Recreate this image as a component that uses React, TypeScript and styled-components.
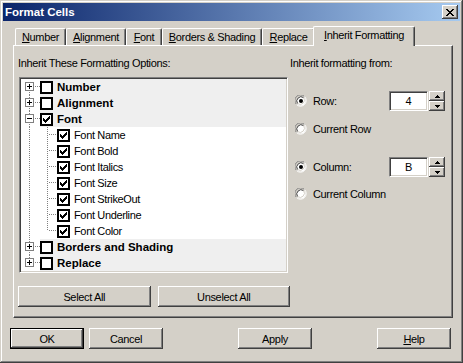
import React from "react";
import styled, { createGlobalStyle } from "styled-components";

const GlobalStyle = createGlobalStyle`
  html, body {
    margin: 0;
    padding: 0;
    background: #d4d0c8;
  }
  body {
    font-family: "Liberation Sans", Arial, sans-serif;
    font-size: 11px;
    letter-spacing: -0.35px;
    color: #000;
  }
`;

const Window = styled.div`
  box-sizing: border-box;
  width: 463px;
  height: 363px;
  padding: 3px;
  background: #d4d0c8;
  box-shadow: inset -1px -1px #404040, inset 1px 1px #d4d0c8,
    inset -2px -2px #808080, inset 2px 2px #ffffff;
  display: flex;
  flex-direction: column;
`;

const TitleBar = styled.div`
  height: 18px;
  display: flex;
  align-items: center;
  padding: 0 2px 0 2px;
  background: linear-gradient(to right, #0a246a, #a6caf0);
`;

const TitleText = styled.span`
  flex: 1;
  color: #fff;
  font-weight: bold;
  font-size: 11.5px;
  letter-spacing: 0;
`;

const CloseBox = styled.div`
  box-sizing: border-box;
  width: 16px;
  height: 14px;
  background: #d4d0c8;
  box-shadow: inset -1px -1px #404040, inset 1px 1px #ffffff,
    inset -2px -2px #808080;
  display: flex;
  align-items: center;
  justify-content: center;
`;

const Body = styled.div`
  padding: 5px 0 0 10px;
`;

const TabRow = styled.div`
  height: 19px;
  display: flex;
  align-items: flex-end;
  padding-left: 2px;
`;

const Tab = styled.div<{ $w: number; $active?: boolean }>`
  box-sizing: border-box;
  width: ${(p) => p.$w}px;
  height: ${(p) => (p.$active ? 20 : 17)}px;
  margin: ${(p) => (p.$active ? "0 -2px -1px -2px" : "0")};
  position: relative;
  z-index: ${(p) => (p.$active ? 1 : 0)};
  background: #d4d0c8;
  border-top: 1px solid #fff;
  border-left: 1px solid #fff;
  border-right: 1px solid #404040;
  border-radius: 2px 2px 0 0;
  box-shadow: inset -1px 0 #808080;
  display: flex;
  justify-content: center;
  padding-top: ${(p) => (p.$active ? 2 : 2)}px;
  white-space: nowrap;
`;

const Panel = styled.div`
  box-sizing: border-box;
  width: 440px;
  height: 273px;
  background: #d4d0c8;
  border-top: 1px solid #fff;
  border-left: 1px solid #fff;
  border-right: 1px solid #404040;
  border-bottom: 1px solid #404040;
  box-shadow: inset -1px -1px #808080;
  display: grid;
  grid-template-columns: 272px 1fr;
  padding: 10px 6px 0 4px;
`;

const Column = styled.div`
  display: flex;
  flex-direction: column;
`;

const Caption = styled.div`
  height: 14px;
  line-height: 14px;
  white-space: nowrap;
`;

const TreeBox = styled.div`
  box-sizing: border-box;
  width: 269px;
  height: 196px;
  margin: 7px 0 0 1px;
  background: #fff;
  border-top: 1px solid #808080;
  border-left: 1px solid #808080;
  border-right: 1px solid #fff;
  border-bottom: 1px solid #fff;
  box-shadow: inset 1px 1px #404040, inset -1px -1px #d4d0c8;
  padding: 1px;
`;

const TreeRow = styled.div`
  display: flex;
  height: 16px;
`;

const TreeItem = styled.div<{ $top?: boolean }>`
  flex: 1;
  display: flex;
  align-items: center;
  gap: 4px;
  background: ${(p) => (p.$top ? "#efefef" : "#fff")};
  font-weight: ${(p) => (p.$top ? "bold" : "normal")};
  font-size: ${(p) => (p.$top ? "11.5px" : "11px")};
  letter-spacing: ${(p) => (p.$top ? "0" : "-0.35px")};
  white-space: nowrap;
`;

const Check = styled.div`
  box-sizing: border-box;
  width: 13px;
  height: 13px;
  border: 2px solid #000;
  background: #fff;
  display: flex;
  align-items: center;
  justify-content: center;
`;

const ButtonRow = styled.div`
  display: flex;
  gap: 7px;
  margin-top: 13px;
`;

const Button = styled.div<{ $w: number; $h?: number; $default?: boolean }>`
  box-sizing: border-box;
  width: ${(p) => p.$w}px;
  height: ${(p) => p.$h ?? 21}px;
  background: #d4d0c8;
  display: flex;
  align-items: center;
  justify-content: center;
  border: ${(p) => (p.$default ? "1px solid #000" : "none")};
  box-shadow: inset -1px -1px #404040, inset 1px 1px #ffffff,
    inset -2px -2px #808080;
  white-space: nowrap;
`;

const OptionLine = styled.div<{ $mt: number }>`
  height: 20px;
  margin-top: ${(p) => p.$mt}px;
  display: flex;
  align-items: center;
  padding-left: 5px;
  white-space: nowrap;
`;

const RadioLabel = styled.span`
  margin-left: 6px;
  flex: 1;
`;

const Spin = styled.div`
  display: flex;
  align-items: center;
  gap: 1px;
  margin-right: 1px;
`;

const EditBox = styled.div`
  box-sizing: border-box;
  width: 39px;
  height: 20px;
  background: #fff;
  border-top: 1px solid #808080;
  border-left: 1px solid #808080;
  border-right: 1px solid #fff;
  border-bottom: 1px solid #fff;
  box-shadow: inset 1px 1px #404040, inset -1px -1px #d4d0c8;
  display: flex;
  align-items: center;
  justify-content: center;
`;

const SpinButtons = styled.div`
  display: flex;
  flex-direction: column;
`;

const SpinButton = styled.div`
  box-sizing: border-box;
  width: 16px;
  height: 10px;
  background: #d4d0c8;
  box-shadow: inset -1px -1px #404040, inset 1px 1px #ffffff,
    inset -2px -2px #808080;
  display: flex;
  align-items: center;
  justify-content: center;
`;

const Footer = styled.div`
  display: flex;
  margin-top: 10px;
  padding-left: 7px;
`;

const Spacer = styled.div<{ $w: number }>`
  width: ${(p) => p.$w}px;
  flex-shrink: 0;
`;

type GutterKind = "first" | "mid" | "last" | "child" | "childLast";

function Gutter({ kind, expanded }: { kind: GutterKind; expanded?: boolean }) {
  const dot = { stroke: "#808080", strokeDasharray: "1 1", shapeRendering: "crispEdges" as const };
  if (kind === "child" || kind === "childLast") {
    return (
      <svg width="36" height="16" style={{ flexShrink: 0 }}>
        <line x1="8.5" y1="0" x2="8.5" y2="16" {...dot} />
        <line x1="26.5" y1="0" x2="26.5" y2={kind === "childLast" ? 8 : 16} {...dot} />
        <line x1="28" y1="7.5" x2="36" y2="7.5" {...dot} />
      </svg>
    );
  }
  return (
    <svg width="19" height="16" style={{ flexShrink: 0 }}>
      {kind !== "first" && <line x1="8.5" y1="0" x2="8.5" y2="3" {...dot} />}
      {kind !== "last" && <line x1="8.5" y1="13" x2="8.5" y2="16" {...dot} />}
      <line x1="14" y1="7.5" x2="19" y2="7.5" {...dot} />
      <rect x="4.5" y="3.5" width="8" height="8" fill="#fff" stroke="#808080" shapeRendering="crispEdges" />
      <line x1="6" y1="7.5" x2="11" y2="7.5" stroke="#000" shapeRendering="crispEdges" />
      {!expanded && <line x1="8.5" y1="5" x2="8.5" y2="10" stroke="#000" shapeRendering="crispEdges" />}
    </svg>
  );
}

function CheckBox({ checked }: { checked?: boolean }) {
  return (
    <Check>
      {checked && (
        <svg width="7" height="7" viewBox="0 0 7 7">
          <path d="M0 2h1v1h1v1h1V3h1V2h1V1h1V0h1v3H6v1H5v1H4v1H3v1H2V6H1V5H0z" fill="#000" />
        </svg>
      )}
    </Check>
  );
}

function Radio({ checked }: { checked?: boolean }) {
  return (
    <svg width="12" height="12" viewBox="0 0 12 12" style={{ flexShrink: 0 }}>
      <path d="M1.5 9.5 A5.5 5.5 0 0 1 9.5 1.5" fill="none" stroke="#808080" />
      <path d="M9.5 1.5 A5.5 5.5 0 0 1 1.5 9.5" fill="none" stroke="#ffffff" />
      <circle cx="6" cy="6" r="4.5" fill="#fff" />
      <path d="M2.6 8.6 A4.3 4.3 0 0 1 8.6 2.6" fill="none" stroke="#404040" />
      <path d="M8.6 2.6 A4.3 4.3 0 0 1 2.6 8.6" fill="none" stroke="#d4d0c8" />
      {checked && <circle cx="6" cy="6" r="2" fill="#000" />}
    </svg>
  );
}

function SpinBox({ value }: { value: string }) {
  return (
    <Spin>
      <EditBox>{value}</EditBox>
      <SpinButtons>
        <SpinButton>
          <svg width="5" height="3"><path d="M2 0h1v1h1v1h1v1H0V2h1V1h1z" fill="#000" /></svg>
        </SpinButton>
        <SpinButton>
          <svg width="5" height="3"><path d="M0 0h5v1H4v1H3v1H2V2H1V1H0z" fill="#000" /></svg>
        </SpinButton>
      </SpinButtons>
    </Spin>
  );
}

type Node = { label: string; top: boolean; checked: boolean; kind: GutterKind; expanded?: boolean };

const nodes: Node[] = [
  { label: "Number", top: true, checked: false, kind: "first" },
  { label: "Alignment", top: true, checked: false, kind: "mid" },
  { label: "Font", top: true, checked: true, kind: "mid", expanded: true },
  { label: "Font Name", top: false, checked: true, kind: "child" },
  { label: "Font Bold", top: false, checked: true, kind: "child" },
  { label: "Font Italics", top: false, checked: true, kind: "child" },
  { label: "Font Size", top: false, checked: true, kind: "child" },
  { label: "Font StrikeOut", top: false, checked: true, kind: "child" },
  { label: "Font Underline", top: false, checked: true, kind: "child" },
  { label: "Font Color", top: false, checked: true, kind: "childLast" },
  { label: "Borders and Shading", top: true, checked: false, kind: "mid" },
  { label: "Replace", top: true, checked: false, kind: "last" },
];

const tabs = [
  { key: "N", rest: "umber", w: 51 },
  { key: "A", rest: "lignment", w: 60 },
  { key: "F", rest: "ont", w: 36 },
  { key: "B", rest: "orders & Shading", w: 100 },
  { key: "R", rest: "eplace", w: 53 },
  { key: "I", rest: "nherit Formatting", w: 102, active: true },
];

export default function App() {
  return (
    <>
      <GlobalStyle />
      <Window>
        <TitleBar>
          <TitleText>Format Cells</TitleText>
          <CloseBox>
            <svg width="8" height="7" viewBox="0 0 8 7">
              <path d="M0 0h2v1h1v1h2V1h1V0h2v1H7v1H6v1H5v1h1v1h1v1h1v1H6V6H5V5H3v1H2v1H0V6h1V5h1V4h1V3H2V2H1V1H0z" fill="#000" />
            </svg>
          </CloseBox>
        </TitleBar>

        <Body>
          <TabRow>
            {tabs.map((t) => (
              <Tab key={t.key} $w={t.w} $active={t.active}>
                <span>
                  <u>{t.key}</u>
                  {t.rest}
                </span>
              </Tab>
            ))}
          </TabRow>
          <Panel>
            <Column>
              <Caption>Inherit These Formatting Options:</Caption>
              <TreeBox>
                {nodes.map((n) => (
                  <TreeRow key={n.label}>
                    <Gutter kind={n.kind} expanded={n.expanded} />
                    <TreeItem $top={n.top}>
                      <CheckBox checked={n.checked} />
                      <span>{n.label}</span>
                    </TreeItem>
                  </TreeRow>
                ))}
              </TreeBox>
              <ButtonRow>
                <Button $w={134} $h={21}>Select All</Button>
                <Button $w={134} $h={21}>Unselect All</Button>
              </ButtonRow>
            </Column>

            <Column>
              <Caption>Inherit formatting from:</Caption>
              <OptionLine $mt={21}>
                <Radio checked />
                <RadioLabel>Row:</RadioLabel>
                <SpinBox value="4" />
              </OptionLine>
              <OptionLine $mt={8}>
                <Radio />
                <RadioLabel>Current Row</RadioLabel>
              </OptionLine>
              <OptionLine $mt={18}>
                <Radio checked />
                <RadioLabel>Column:</RadioLabel>
                <SpinBox value="B" />
              </OptionLine>
              <OptionLine $mt={7}>
                <Radio />
                <RadioLabel>Current Column</RadioLabel>
              </OptionLine>
            </Column>
          </Panel>
        </Body>

        <Footer>
          <Button $w={74} $default>OK</Button>
          <Spacer $w={5} />
          <Button $w={74}>Cancel</Button>
          <Spacer $w={75} />
          <Button $w={74}>Apply</Button>
          <Spacer $w={65} />
          <Button $w={74}>
            <span>
              <u>H</u>elp
            </span>
          </Button>
        </Footer>
      </Window>
    </>
  );
}
